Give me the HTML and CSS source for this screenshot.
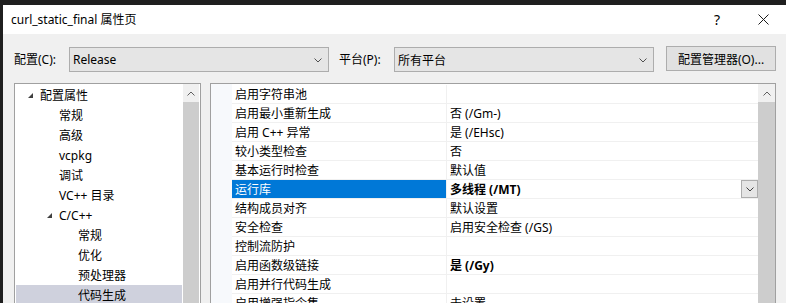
FILE: index.html
```html
<!DOCTYPE html>
<html lang="zh-CN">
<head>
  <meta charset="UTF-8">
  <title>curl_static_final 属性页</title>
  <link rel="stylesheet" href="styles.css">
</head>
<body>
  <div class="window">

    <div class="titlebar">
      <span class="title">curl_static_final 属性页</span>
      <span class="help">?</span>
      <span class="close">
        <svg width="11" height="11" viewBox="0 0 11 11"><path d="M0.5 0.5L10.5 10.5M10.5 0.5L0.5 10.5" stroke="#1a1a1a" stroke-width="1" fill="none"/></svg>
      </span>
    </div>

    <div class="toolbar">
      <span class="label">配置(C):</span>
      <div class="combo">
        <span>Release</span>
        <svg class="chev" width="8" height="5" viewBox="0 0 8 5"><path d="M0.5 0.5L4 4L7.5 0.5" stroke="#505050" fill="none"/></svg>
      </div>
      <span class="label label-gap">平台(P):</span>
      <div class="combo">
        <span>所有平台</span>
        <svg class="chev" width="8" height="5" viewBox="0 0 8 5"><path d="M0.5 0.5L4 4L7.5 0.5" stroke="#505050" fill="none"/></svg>
      </div>
      <button class="btn">配置管理器(O)...</button>
    </div>

    <div class="panes">
      <div class="tree">
        <ul class="tree-list">
          <li class="lvl1"><span class="tog"><svg width="5" height="5" viewBox="0 0 5 5"><path d="M5 0L5 5L0 5Z" fill="#404040"/></svg></span>配置属性</li>
          <li class="lvl2"><span class="tog"></span>常规</li>
          <li class="lvl2"><span class="tog"></span>高级</li>
          <li class="lvl2"><span class="tog"></span>vcpkg</li>
          <li class="lvl2"><span class="tog"></span>调试</li>
          <li class="lvl2"><span class="tog"></span>VC++ 目录</li>
          <li class="lvl2"><span class="tog"><svg width="5" height="5" viewBox="0 0 5 5"><path d="M5 0L5 5L0 5Z" fill="#404040"/></svg></span>C/C++</li>
          <li class="lvl3"><span class="tog"></span>常规</li>
          <li class="lvl3"><span class="tog"></span>优化</li>
          <li class="lvl3"><span class="tog"></span>预处理器</li>
          <li class="lvl3 current"><span class="tog"></span>代码生成</li>
        </ul>
        <div class="vscroll">
          <div class="arrow"><svg width="8" height="5" viewBox="0 0 8 5"><path d="M0.5 4.5L4 1L7.5 4.5" stroke="#606060" fill="none"/></svg></div>
          <div class="thumb"></div>
        </div>
      </div>

      <div class="grid">
        <div class="gutter"></div>
        <div class="rows">
          <div class="row"><div class="name">启用字符串池</div><div class="value"></div></div>
          <div class="row"><div class="name">启用最小重新生成</div><div class="value">否 (/Gm-)</div></div>
          <div class="row"><div class="name">启用 C++ 异常</div><div class="value">是 (/EHsc)</div></div>
          <div class="row"><div class="name">较小类型检查</div><div class="value">否</div></div>
          <div class="row"><div class="name">基本运行时检查</div><div class="value">默认值</div></div>
          <div class="row selected">
            <div class="name">运行库</div>
            <div class="value bold">
              <span>多线程 (/MT)</span>
              <span class="drop"><svg width="8" height="5" viewBox="0 0 8 5"><path d="M0.5 0.5L4 4L7.5 0.5" stroke="#404040" fill="none"/></svg></span>
            </div>
          </div>
          <div class="row"><div class="name">结构成员对齐</div><div class="value">默认设置</div></div>
          <div class="row"><div class="name">安全检查</div><div class="value">启用安全检查 (/GS)</div></div>
          <div class="row"><div class="name">控制流防护</div><div class="value"></div></div>
          <div class="row"><div class="name">启用函数级链接</div><div class="value bold">是 (/Gy)</div></div>
          <div class="row"><div class="name">启用并行代码生成</div><div class="value"></div></div>
          <div class="row"><div class="name">启用增强指令集</div><div class="value">未设置</div></div>
        </div>
        <div class="vscroll">
          <div class="arrow"><svg width="8" height="5" viewBox="0 0 8 5"><path d="M0.5 4.5L4 1L7.5 4.5" stroke="#606060" fill="none"/></svg></div>
          <div class="thumb"></div>
        </div>
      </div>
    </div>

  </div>
</body>
</html>
```

FILE: styles.css
```css
html, body {
  height: 303px;
  overflow: hidden;
}

body {
  margin: 0;
  padding: 5px 0 0 3px;
  background: #1f1f1f;
  font-family: "Noto Sans", "Noto Sans CJK SC", sans-serif;
  font-size: 12px;
  color: #000;
}

.window {
  background: #f0f0f0;
  height: 400px;
}

/* title bar */
.titlebar {
  height: 29px;
  background: #fff;
  display: flex;
  align-items: center;
  padding-left: 8px;
}

.title {
  flex: 1;
  line-height: 16px;
  padding-top: 1px;
}

.help {
  font-size: 14px;
  width: 8px;
  margin-right: 36px;
  line-height: 16px;
}

.close {
  width: 11px;
  margin-right: 17px;
  display: flex;
}

/* toolbar */
.toolbar {
  display: flex;
  align-items: flex-start;
  padding: 12px 0 0 11px;
  height: 37px;
  box-sizing: border-box;
}

.label {
  width: 55px;
  line-height: 25px;
  margin-top: 1px;
}

.label-gap {
  margin-left: 10px;
}

.combo {
  width: 260px;
  height: 25px;
  box-sizing: border-box;
  margin-top: 1px;
  border: 1px solid #adadad;
  background: #e5e5e5;
  display: flex;
  align-items: center;
  justify-content: space-between;
  padding: 0 6px 0 3px;
}

.combo .chev {
  margin-top: 1px;
}

.btn {
  margin-left: 12px;
  width: 110px;
  height: 25px;
  border: 1px solid #adadad;
  background: #e1e1e1;
  font: inherit;
  color: #000;
  padding: 0;
}

/* panes */
.panes {
  display: flex;
  padding: 12px 0 0 11px;
  gap: 9px;
  height: 240px;
}

.tree {
  width: 187px;
  box-sizing: border-box;
  border: 1px solid #a0a0a0;
  background: #fff;
  display: flex;
}

.tree-list {
  list-style: none;
  margin: 0;
  padding: 1px 1px 0 1px;
  flex: 1;
}

.tree-list li {
  height: 20px;
  line-height: 21px;
  display: flex;
  align-items: center;
  white-space: nowrap;
}

.tree-list .lvl1 { padding-left: 10px; }
.tree-list .lvl2 { padding-left: 29px; }
.tree-list .lvl3 { padding-left: 48px; }

.tree-list .current {
  background: #cfd1dd;
}

.tog {
  width: 14px;
  height: 20px;
  display: flex;
  align-items: center;
  padding-left: 2px;
  box-sizing: border-box;
}

.vscroll {
  width: 17px;
  background: #f0f0f0;
  display: flex;
  flex-direction: column;
}

.tree .vscroll {
  width: 16px;
  margin-right: 1px;
}

.arrow {
  height: 18px;
  display: flex;
  align-items: center;
  justify-content: center;
}

.thumb {
  flex: 1;
  background: #cdcdcd;
}

/* property grid */
.grid {
  width: 566px;
  box-sizing: border-box;
  border: 1px solid #a0a0a0;
  background: #fff;
  display: flex;
}

.gutter {
  width: 21px;
  background: #f7f9fc;
}

.rows {
  width: 526px;
  padding-top: 1px;
}

.row {
  display: flex;
  height: 19px;
  box-sizing: border-box;
  border-bottom: 1px solid #f0f0f0;
  line-height: 20px;
  white-space: nowrap;
}

.name {
  width: 215px;
  box-sizing: border-box;
  padding-left: 3px;
  border-right: 1px solid #f0f0f0;
}

.value {
  flex: 1;
  padding-left: 3px;
  display: flex;
  justify-content: space-between;
}

.bold {
  font-weight: bold;
}

.selected .name {
  background: #0078d7;
  color: #fff;
}

.drop {
  width: 17px;
  height: 18px;
  box-sizing: border-box;
  border: 1px solid #adadad;
  background: #e5e5e5;
  display: flex;
  align-items: center;
  justify-content: center;
}
```
